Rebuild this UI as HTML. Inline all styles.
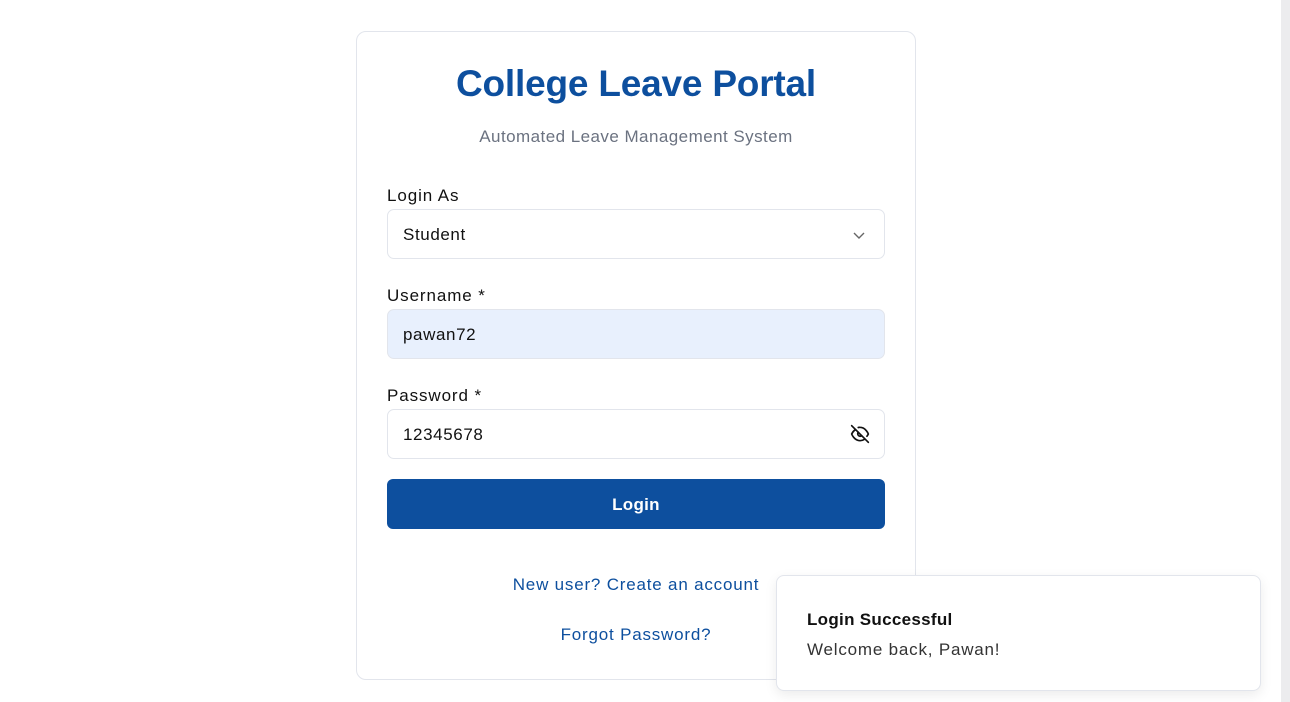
<!DOCTYPE html>
<html><head><meta charset="utf-8"><style>
*{box-sizing:border-box;margin:0;padding:0}
html,body{width:1290px;height:702px;overflow:hidden;background:#fff;font-family:"Liberation Sans",sans-serif;color:#111}
.sb{position:absolute;left:1281px;top:0;width:9px;height:702px;background:#ececee}
.card{position:absolute;left:356px;top:31px;width:560px;height:649px;border:1px solid #e2e5ec;border-radius:10px;background:#fff}
h1{position:absolute;top:63px;text-align:center;font-size:37px;font-weight:bold;color:#0d4f9e;letter-spacing:-0.2px}
.sub{position:absolute;top:127px;text-align:center;font-size:17px;color:#6b7280;letter-spacing:0.45px}
.lbl{position:absolute;left:387px;font-size:17px;color:#111;letter-spacing:0.9px}
.inp{position:absolute;left:387px;width:498px;height:50px;border:1px solid #e2e5ec;border-radius:7px;font-size:17px;padding:0 15px;line-height:50px;color:#111;letter-spacing:0.6px}
.btn{position:absolute;left:387px;top:479px;width:498px;height:50px;border-radius:6px;background:#0d4f9e;color:#fff;font-size:17px;font-weight:bold;text-align:center;line-height:52px;letter-spacing:0.3px}
.lnk{position:absolute;left:356px;width:560px;text-align:center;font-size:17px;color:#0d4f9e;letter-spacing:0.8px}
.toast{position:absolute;left:776px;top:575px;width:485px;height:116px;border:1px solid #e2e5ec;border-radius:8px;background:#fff;box-shadow:0 4px 12px rgba(0,0,0,.08)}
</style></head><body>
<div class="sb"></div>
<div class="card"></div>
<h1 style="left:356px;width:560px">College Leave Portal</h1>
<div class="sub" style="left:356px;width:560px">Automated Leave Management System</div>
<div class="lbl" style="top:186px">Login As</div>
<div class="inp" style="top:209px">Student
<svg style="position:absolute;right:18px;top:18px" width="14" height="14" viewBox="0 0 14 14"><path d="M2 5l5 5 5-5" fill="none" stroke="#666" stroke-width="1.4"/></svg></div>
<div class="lbl" style="top:286px">Username *</div>
<div class="inp" style="top:309px;background:#e8f0fd">pawan72</div>
<div class="lbl" style="top:386px">Password *</div>
<div class="inp" style="top:409px">12345678
<svg style="position:absolute;right:14px;top:14px" width="20" height="20" viewBox="0 0 24 24" fill="none" stroke="#111" stroke-width="2" stroke-linecap="round"><path d="M9.9 4.2A9 9 0 0 1 12 4c7 0 10 8 10 8a13 13 0 0 1-1.7 2.7M6.6 6.6A13.5 13.5 0 0 0 2 12s3 8 10 8a9.7 9.7 0 0 0 5.4-1.6"/><path d="M9.9 9.9a3 3 0 0 0 4.2 4.2"/><path d="M2 2l20 20"/></svg></div>
<div class="btn">Login</div>
<div class="lnk" style="top:575px">New user? Create an account</div>
<div class="lnk" style="top:625px">Forgot Password?</div>
<div class="toast">
<div style="position:absolute;left:30px;top:34px;font-size:17px;font-weight:bold;letter-spacing:0.3px">Login Successful</div>
<div style="position:absolute;left:30px;top:64px;font-size:17px;color:#333;letter-spacing:0.8px">Welcome back, Pawan!</div>
</div>
</body></html>
